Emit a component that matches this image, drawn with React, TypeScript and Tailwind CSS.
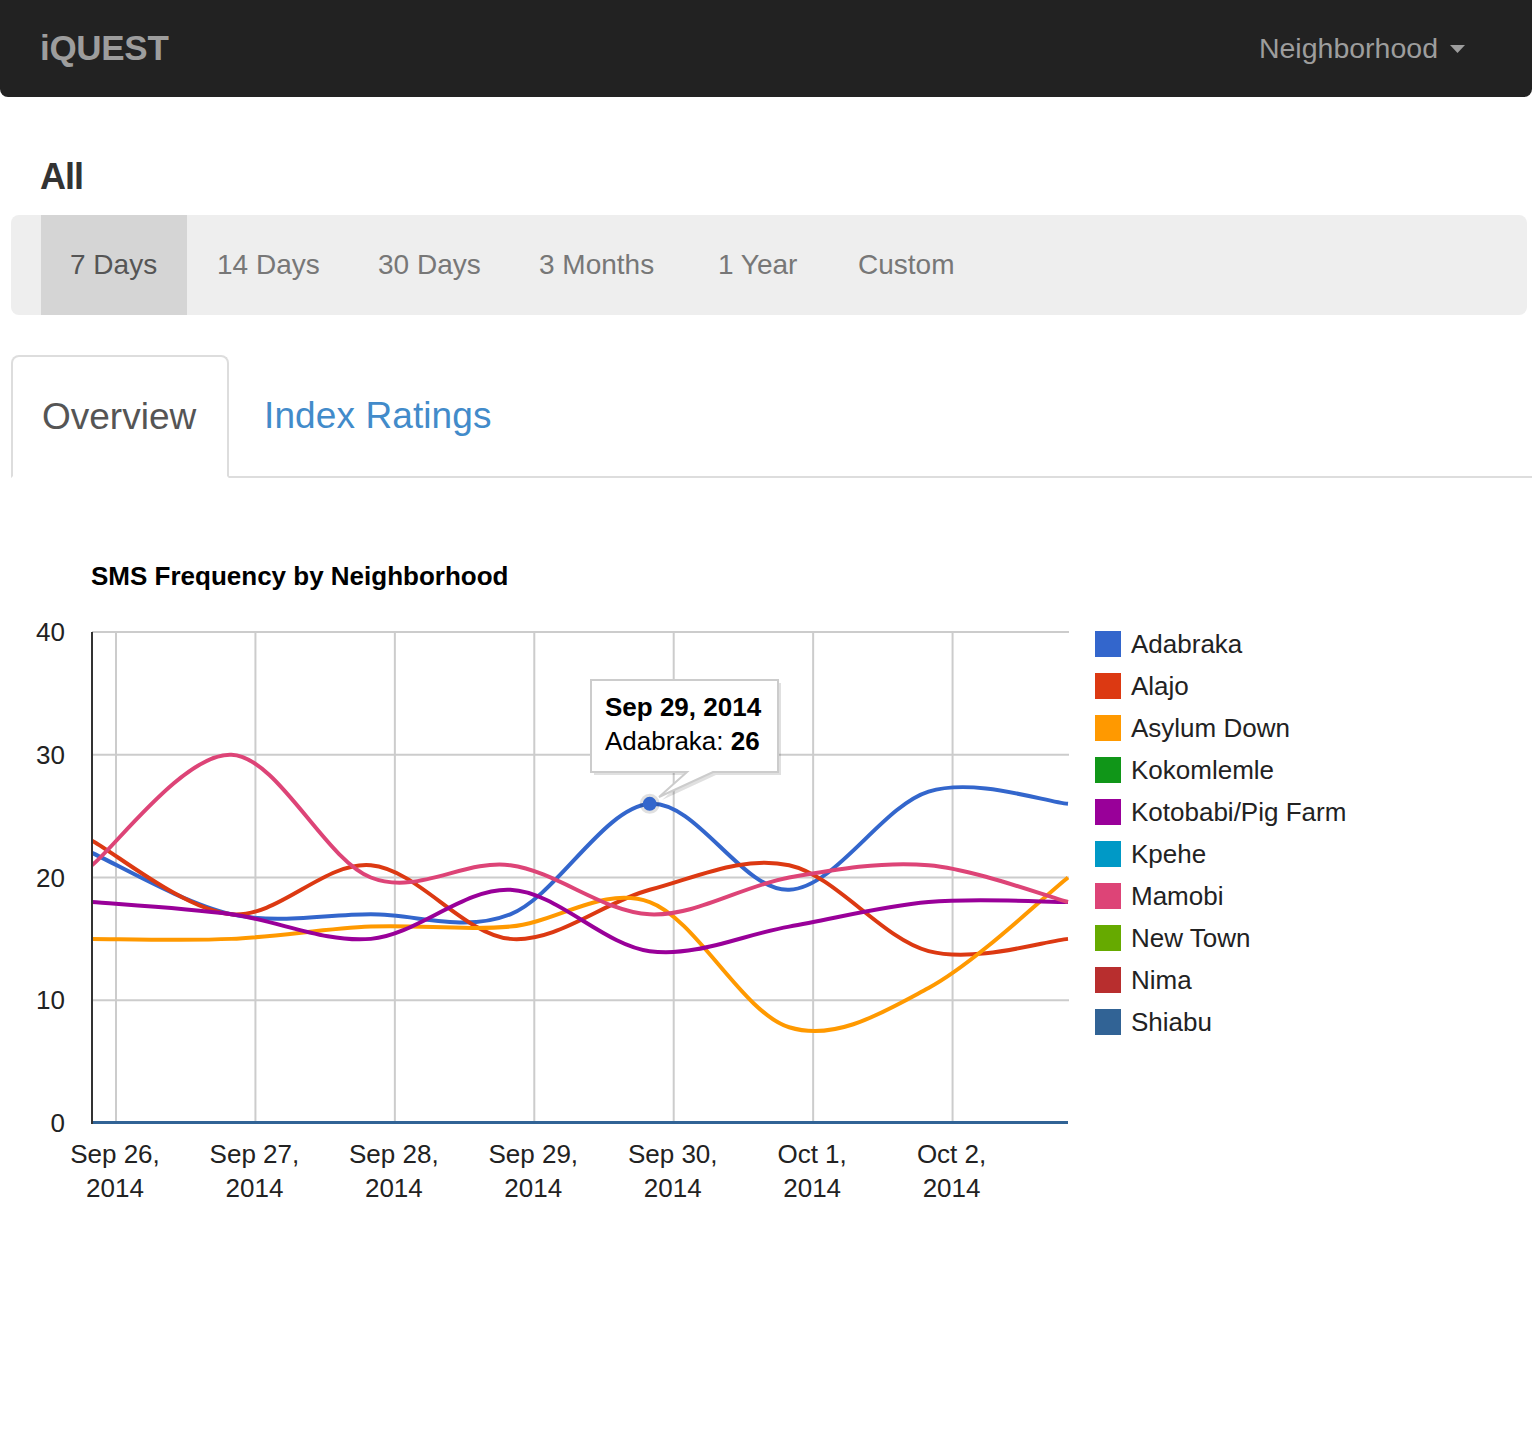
import React from "react";

// chart geometry (svg sits at page y = 600)
const TOP = 32;
const BOTTOM = 523;
const LEFT = 92;
const RIGHT = 1069;
const X0 = 92;
const STEP = (1068 - 92) / 7;

const y = (v: number) => BOTTOM - (v * (BOTTOM - TOP)) / 40;

const zeros = [0, 0, 0, 0, 0, 0, 0, 0];

const series = [
  { name: "Adabraka", color: "#3366cc", data: [22, 17, 17, 17, 26, 19, 27, 26] },
  { name: "Alajo", color: "#dc3912", data: [23, 17, 21, 15, 19, 21, 14, 15] },
  { name: "Asylum Down", color: "#ff9900", data: [15, 15, 16, 16, 18, 7.8, 11, 20] },
  { name: "Kokomlemle", color: "#109618", data: zeros },
  { name: "Kotobabi/Pig Farm", color: "#990099", data: [18, 17, 15, 19, 14, 16, 18, 18] },
  { name: "Kpehe", color: "#0099c6", data: zeros },
  { name: "Mamobi", color: "#dd4477", data: [21, 30, 20, 21, 17, 20, 21, 18] },
  { name: "New Town", color: "#66aa00", data: zeros },
  { name: "Nima", color: "#b82e2e", data: zeros },
  { name: "Shiabu", color: "#316395", data: zeros },
];

const ranges = [
  { label: "7 Days", w: "w-[146px]" },
  { label: "14 Days", w: "w-[161px]" },
  { label: "30 Days", w: "w-[161px]" },
  { label: "3 Months", w: "w-[179px]" },
  { label: "1 Year", w: "w-[140px]" },
  { label: "Custom", w: "w-[140px]" },
];

const dates = ["Sep 26,", "Sep 27,", "Sep 28,", "Sep 29,", "Sep 30,", "Oct 1,", "Oct 2,"];

// smooth curve through the points (catmull-rom -> bezier)
function curve(vals: number[]) {
  const pts = vals.map((v, i) => [X0 + i * STEP, y(v)]);
  let d = `M${pts[0][0]},${pts[0][1]}`;
  for (let i = 0; i < pts.length - 1; i++) {
    const p0 = pts[i - 1] ?? pts[i];
    const p1 = pts[i];
    const p2 = pts[i + 1];
    const p3 = pts[i + 2] ?? pts[i + 1];
    const c1x = p1[0] + (p2[0] - p0[0]) / 6;
    const c1y = p1[1] + (p2[1] - p0[1]) / 6;
    const c2x = p2[0] - (p3[0] - p1[0]) / 6;
    const c2y = p2[1] - (p3[1] - p1[1]) / 6;
    d += ` C${c1x},${c1y} ${c2x},${c2y} ${p2[0]},${p2[1]}`;
  }
  return d;
}

const Chart = () => {
  const tip = "M591,80 H778 V172 H713 L659,197 L687,172 H591 Z";
  return (
    <svg width="1080" height="640" className="block shrink-0" fontFamily="'Liberation Sans', Arial, sans-serif">
      <defs>
        <clipPath id="plot">
          <rect x={LEFT} y={TOP - 4} width={RIGHT - LEFT} height={BOTTOM - TOP + 5} />
        </clipPath>
      </defs>

      {/* grid */}
      {[0, 1, 2, 3, 4, 5, 6].map((i) => (
        <line key={i} x1={116 + i * STEP} x2={116 + i * STEP} y1={TOP} y2={BOTTOM} stroke="#cccccc" strokeWidth="2" />
      ))}
      {[10, 20, 30, 40].map((v) => (
        <line key={v} x1={LEFT} x2={RIGHT} y1={y(v)} y2={y(v)} stroke="#cccccc" strokeWidth="2" />
      ))}

      {/* y labels */}
      {[0, 10, 20, 30, 40].map((v) => (
        <text key={v} x="65" y={y(v) + 9} textAnchor="end" fontSize="26" fill="#222">
          {v}
        </text>
      ))}

      {/* x labels */}
      {dates.map((d, i) => (
        <g key={d} fontSize="26" fill="#222" textAnchor="middle">
          <text x={115 + i * STEP} y="563">{d}</text>
          <text x={115 + i * STEP} y="597">2014</text>
        </g>
      ))}

      {/* lines */}
      <g clipPath="url(#plot)">
        {series.map((s) => (
          <path key={s.name} d={curve(s.data)} fill="none" stroke={s.color} strokeWidth="4" />
        ))}
      </g>

      <line x1={LEFT} x2={LEFT} y1={TOP} y2={BOTTOM + 1} stroke="#333" strokeWidth="2" />

      {/* hovered point */}
      <circle cx={X0 + 4 * STEP} cy={y(26)} r="10" fill="#000" opacity="0.12" />
      <circle cx={X0 + 4 * STEP} cy={y(26)} r="7" fill="#3366cc" />

      {/* tooltip */}
      <path d={tip} transform="translate(3,3)" fill="#000" opacity="0.12" />
      <path d={tip} fill="#fff" stroke="#cccccc" strokeWidth="2" />
      <text x="605" y="116" fontSize="26" fontWeight="bold" fill="#000">
        Sep 29, 2014
      </text>
      <text x="605" y="150" fontSize="26" fill="#000">
        Adabraka: <tspan fontWeight="bold">26</tspan>
      </text>
    </svg>
  );
};

export default function App() {
  return (
    <div className="min-h-[1440px] bg-white font-['Liberation_Sans',Arial,sans-serif]">
      <nav className="flex h-[97px] items-center justify-between rounded-b-[8px] bg-[#222] pl-[40px] pr-[67px]">
        <span className="text-[35px] font-bold tracking-[-0.3px] text-[#9d9d9d]">iQUEST</span>
        <div className="flex items-center gap-[12px] text-[28.5px] text-[#9d9d9d]">
          <span>Neighborhood</span>
          <svg width="15" height="8" viewBox="0 0 15 8">
            <path d="M0,0 H15 L7.5,8 Z" fill="#9d9d9d" />
          </svg>
        </div>
      </nav>

      <h3 className="mt-[60px] pl-[40px] text-[36px] font-bold leading-[40px] tracking-[-1px] text-[#333]">All</h3>

      <div className="mt-[18px] ml-[11px] mr-[5px] flex h-[100px] rounded-[8px] bg-[#eee] pl-[30px]">
        {ranges.map((r, i) => (
          <div
            key={r.label}
            className={
              i === 0
                ? `flex items-center ${r.w} bg-[#d5d5d5] pl-[29px] text-[28px] text-[#555]`
                : `flex items-center ${r.w} pl-[30px] text-[28px] text-[#777]`
            }
          >
            {r.label}
          </div>
        ))}
      </div>

      <div className="mt-[40px] ml-[11px] flex h-[123px] border-b-2 border-[#ddd]">
        <div className="-mb-[2px] flex h-[123px] w-[218px] items-center rounded-t-[8px] border-2 border-[#ddd] border-b-white bg-white pl-[29px] text-[37px] text-[#555]">
          Overview
        </div>
        <div className="ml-[4px] flex items-center px-[31px] text-[37px] tracking-[0.1px] text-[#428bca]">Index Ratings</div>
      </div>

      <div className="mt-[83px] pl-[91px] text-[26px] font-bold leading-[30px] text-black">SMS Frequency by Neighborhood</div>

      <div className="mt-[9px] flex">
        <Chart />
        <div className="ml-[15px] flex flex-col pt-[23px]">
          {series.map((s) => (
            <div key={s.name} className="flex h-[42px] items-center gap-[10px]">
              <span className="h-[26px] w-[26px]" style={{ backgroundColor: s.color }} />
              <span className="text-[26px] text-[#222]">{s.name}</span>
            </div>
          ))}
        </div>
      </div>
    </div>
  );
}
